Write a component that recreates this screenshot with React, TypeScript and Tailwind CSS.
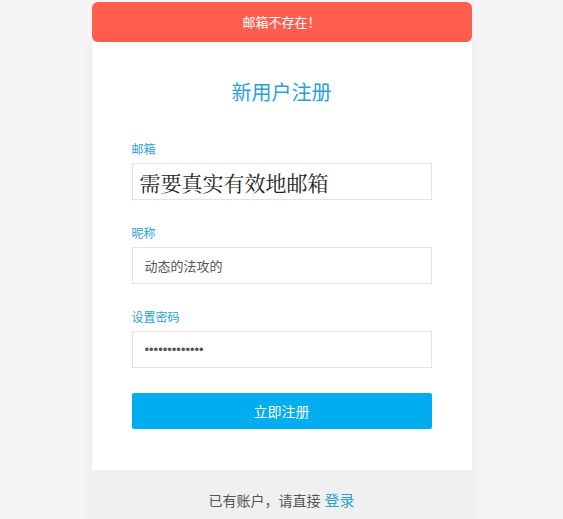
const fieldInput =
  "w-full h-[37px] border border-[#e3e3e3] bg-white outline-none";

const App = () => {
  return (
    <div
      className="w-full min-h-[519px] bg-[#f5f5f5] flex justify-center"
      style={{ fontFamily: '"Microsoft YaHei", "Noto Sans CJK SC", sans-serif' }}
    >
      <div className="w-[380px] flex flex-col pt-[2px]">
        <div className="h-[40px] rounded-[6px] bg-[#ff5e4f] flex items-center justify-center text-white text-[13px]">
          邮箱不存在！
        </div>
        <div className="bg-white shadow-[0_0_12px_rgba(0,0,0,0.06)]">
          <div className="px-[40px] pt-[36px] pb-[41px]">
            <h1 className="text-center text-[20px] leading-[28px] text-[#2a9fd6]">新用户注册</h1>
            <div className="mt-[35px] flex flex-col">
              <label className="text-[12px] leading-[16px] text-[#2a9fd6]">邮箱</label>
              <input
                className={fieldInput + " mt-[6px] pl-[7px] text-[21px] text-[#222]"}
                style={{ fontFamily: '"Noto Serif CJK SC", "Noto Sans CJK SC", serif' }}
                defaultValue="需要真实有效地邮箱"
              />
              <label className="mt-[25px] text-[12px] leading-[16px] text-[#2a9fd6]">昵称</label>
              <input
                className={fieldInput + " mt-[6px] px-[12px] text-[13px] text-[#555]"}
                defaultValue="动态的法攻的"
              />
              <label className="mt-[25px] text-[12px] leading-[16px] text-[#2a9fd6]">设置密码</label>
              <input
                type="password"
                className={fieldInput + " mt-[6px] px-[12px] text-[13px] text-[#555]"}
                style={{ fontFamily: '"Liberation Sans", Arial, sans-serif' }}
                defaultValue="1234567890123"
              />
              <button className="mt-[25px] h-[36px] rounded-[2px] bg-[#00adef] text-white text-[14px]">
                立即注册
              </button>
            </div>
          </div>
          <div className="bg-[#f0f0f0] h-[60px] flex items-center justify-center text-[14px] text-[#555]">
            已有账户，请直接
            <a className="ml-[4px] text-[15px] text-[#2a9fd6]">登录</a>
          </div>
        </div>
      </div>
    </div>
  );
};

export default App;
